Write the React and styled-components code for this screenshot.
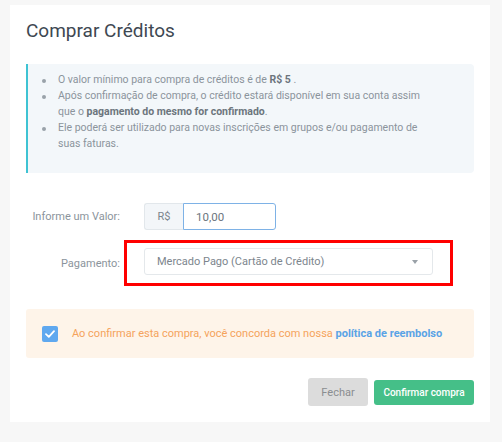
import React from "react";
import styled, { createGlobalStyle } from "styled-components";

const Global = createGlobalStyle`
  html, body { margin: 0; padding: 0; background: #f7f7f7; }
  body { font-family: Roboto, "Liberation Sans", Arial, sans-serif; }
  * { box-sizing: border-box; }
`;

const Page = styled.div`
  width: 502px;
  height: 442px;
  padding: 5px 12px 0 10px;
`;

const Modal = styled.div`
  width: 480px;
  height: 417px;
  background: #fff;
  padding: 15px 16px 16px;
  display: flex;
  flex-direction: column;
`;

const Title = styled.h4`
  margin: 0 0 22px;
  font-size: 19px;
  line-height: 22px;
  font-weight: 400;
  color: #3e4852;
`;

const Info = styled.div`
  background: #f3f7fa;
  border-left: 2px solid #3ec3d3;
  border-radius: 0 4px 4px 0;
  padding: 8px 38px 21px 0;
  color: #8b949c;
  font-size: 10.5px;
  line-height: 16px;
`;

const List = styled.ul`
  margin: 0;
  padding: 0;
  list-style: none;
`;

const Item = styled.li`
  display: flex;
  align-items: flex-start;
`;

const Bullet = styled.span`
  flex: none;
  width: 4px;
  height: 4px;
  border-radius: 50%;
  background: #9aa2a9;
  margin: 6.5px 12px 0 14px;
`;

const Strong = styled.b`
  color: #6c757d;
  font-weight: 700;
`;

const Form = styled.div`
  margin-top: 30px;
  display: flex;
  flex-direction: column;
  gap: 10px;
`;

const Row = styled.div`
  display: flex;
  align-items: center;
`;

const Label = styled.label`
  width: 94px;
  text-align: right;
  font-size: 11px;
  color: #8b949c;
  margin-right: 4px;
  white-space: nowrap;
`;

const Field = styled.div`
  display: flex;
  border: 3px solid ${(p) => (p.$highlight ? "#ff0000" : "transparent")};
  padding: ${(p) => (p.$highlight ? "5px 17px 8px" : "0 17px")};
  ${(p) => (p.$highlight ? "" : "border-width: 0 3px;")}
`;

const Addon = styled.span`
  width: 39px;
  height: 27px;
  display: flex;
  align-items: center;
  justify-content: center;
  background: #f3f6f9;
  border: 1px solid #e2e7eb;
  border-right: none;
  border-radius: 3px 0 0 3px;
  font-size: 11px;
  color: #7c858d;
`;

const Input = styled.div`
  width: 93px;
  height: 27px;
  border: 1px solid #7eb2e6;
  border-radius: 0 3px 3px 0;
  padding-left: 12px;
  display: flex;
  align-items: center;
  font-size: 11.5px;
  color: #6c757d;
`;

const Select = styled.div`
  width: 289px;
  height: 27px;
  border: 1px solid #e4e8eb;
  border-radius: 3px;
  padding: 0 14px 0 12px;
  display: flex;
  align-items: center;
  justify-content: space-between;
  font-size: 11px;
  color: #7c858d;
`;

const Caret = styled.span`
  width: 0;
  height: 0;
  border-left: 3.5px solid transparent;
  border-right: 3.5px solid transparent;
  border-top: 4px solid #9aa1a8;
`;

const Alert = styled.div`
  margin-top: 23px;
  height: 49px;
  background: #fef4e9;
  border-radius: 3px;
  display: flex;
  align-items: center;
  padding-left: 16px;
  gap: 14px;
  font-size: 11px;
  color: #f5a35b;
`;

const Check = styled.span`
  width: 16px;
  height: 16px;
  border-radius: 2px;
  background: #5fa8ef;
  display: flex;
  align-items: center;
  justify-content: center;
`;

const Link = styled.a`
  color: #5aa3e6;
  font-weight: 700;
  text-decoration: none;
`;

const Footer = styled.div`
  margin-top: auto;
  display: flex;
  justify-content: flex-end;
  align-items: center;
  gap: 6px;
`;

const Button = styled.button`
  border: none;
  font-family: inherit;
  border-radius: 3px;
  cursor: pointer;
  background: ${(p) => (p.$primary ? "#45bf88" : "#dcdcdc")};
  color: ${(p) => (p.$primary ? "#fff" : "#8a8d90")};
  width: ${(p) => (p.$primary ? "100px" : "60px")};
  height: ${(p) => (p.$primary ? "25px" : "28px")};
  font-size: ${(p) => (p.$primary ? "10px" : "11px")};
  font-weight: ${(p) => (p.$primary ? 500 : 400)};
  padding: 0;
`;

export default function App() {
  return (
    <>
      <Global />
      <Page>
        <Modal>
          <Title>Comprar Créditos</Title>
          <Info>
            <List>
              <Item>
                <Bullet />
                <span>
                  O valor mínimo para compra de créditos é de <Strong>R$ 5</Strong> .
                </span>
              </Item>
              <Item>
                <Bullet />
                <span>
                  Após confirmação de compra, o crédito estará disponível em sua conta assim que o{" "}
                  <Strong>pagamento do mesmo for confirmado</Strong>.
                </span>
              </Item>
              <Item>
                <Bullet />
                <span>
                  Ele poderá ser utilizado para novas inscrições em grupos e/ou pagamento de suas faturas.
                </span>
              </Item>
            </List>
          </Info>
          <Form>
            <Row>
              <Label>Informe um Valor:</Label>
              <Field>
                <Addon>R$</Addon>
                <Input>10,00</Input>
              </Field>
            </Row>
            <Row>
              <Label>Pagamento:</Label>
              <Field $highlight>
                <Select>
                  <span>Mercado Pago (Cartão de Crédito)</span>
                  <Caret />
                </Select>
              </Field>
            </Row>
          </Form>
          <Alert>
            <Check>
              <svg width="10" height="8" viewBox="0 0 10 8">
                <path d="M1 4.2 L3.8 6.8 L9 1.2" fill="none" stroke="#fff" strokeWidth="1.8" strokeLinecap="round" strokeLinejoin="round" />
              </svg>
            </Check>
            <span>
              Ao confirmar esta compra, você concorda com nossa <Link>política de reembolso</Link>
            </span>
          </Alert>
          <Footer>
            <Button>Fechar</Button>
            <Button $primary>Confirmar compra</Button>
          </Footer>
        </Modal>
      </Page>
    </>
  );
}
